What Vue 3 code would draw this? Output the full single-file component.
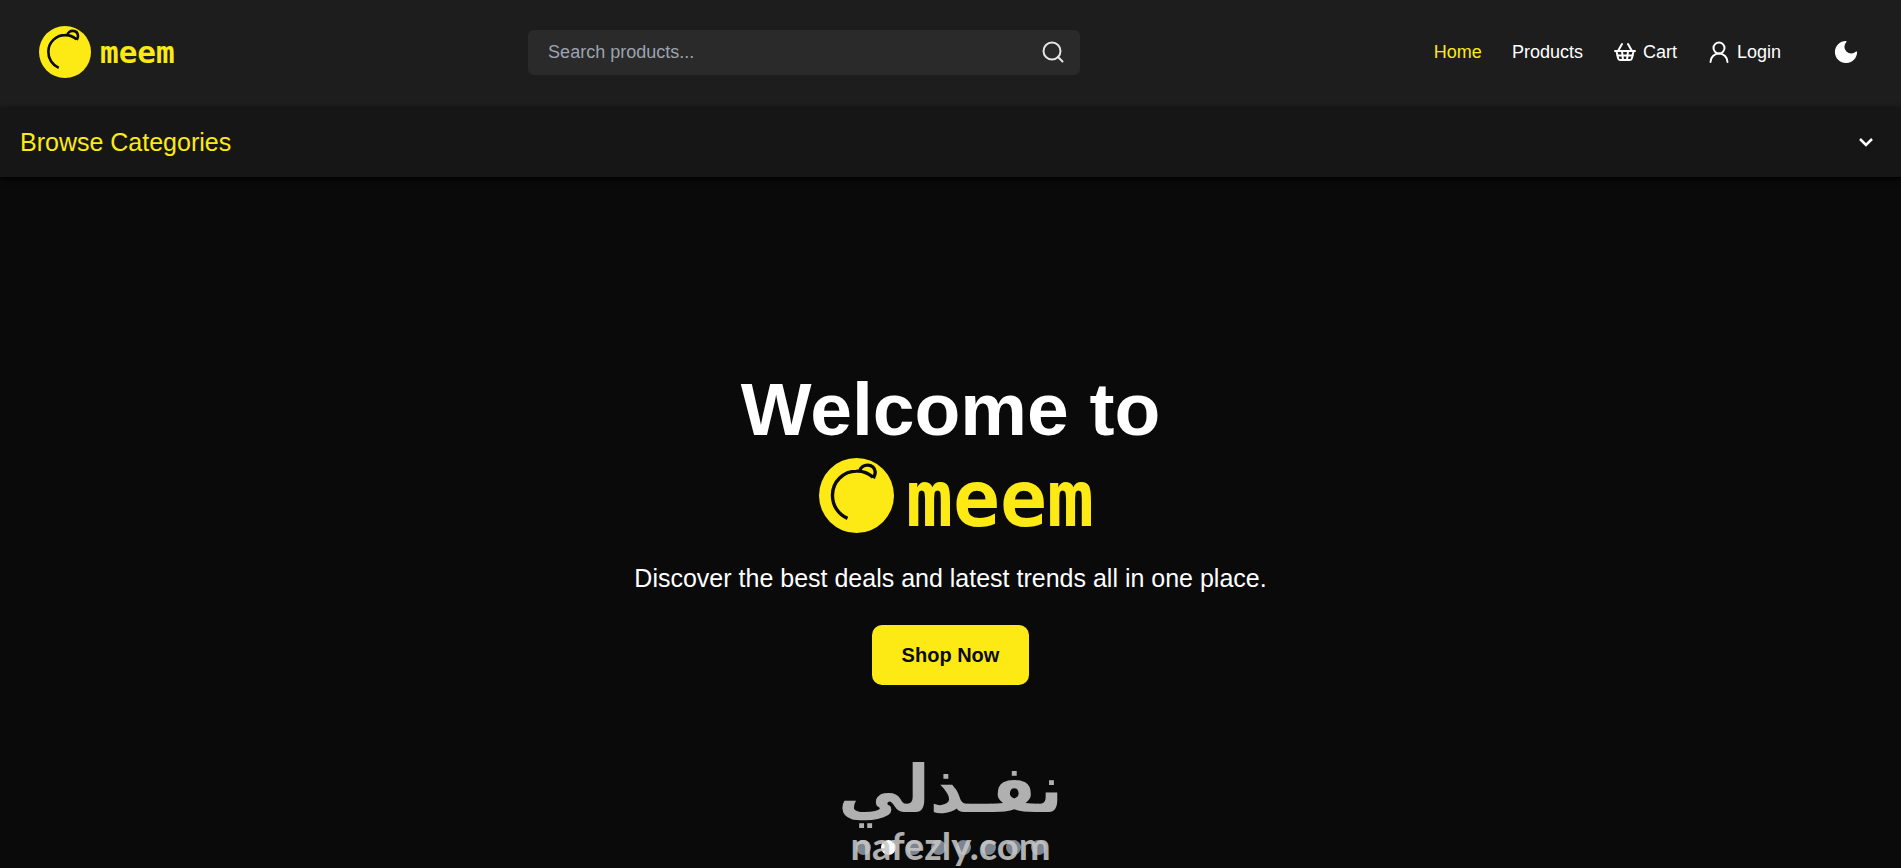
<script setup>
import { ref } from "vue";

const keyword = ref("");
const showCategories = ref(false);
const activeSlide = ref(1);
const slideCount = 8;

// 切换分类面板
function toggleCategories() {
  showCategories.value = !showCategories.value;
}

// 切换轮播
function goToSlide(index) {
  activeSlide.value = index;
}
</script>

<template>
  <div class="page">
    <header class="header">
      <a href="#" class="logo">
        <svg class="logo-icon" viewBox="0 0 100 100" aria-hidden="true">
          <circle cx="50" cy="50" r="50" fill="#fdea14" />
          <g fill="none" stroke="#0a0a0a" stroke-width="5">
            <path d="M38 80.5A33 33 0 0 1 18 49A32 32 0 0 1 50 17.5Q62 17 72 25.5" />
            <path d="M54.5 17.5C56 7 74 6 75 19Q75 22 72.5 27" />
          </g>
        </svg>
        <span class="logo-text">meem</span>
      </a>

      <form class="search" @submit.prevent>
        <input
          v-model="keyword"
          class="search-input"
          type="text"
          placeholder="Search products..."
          aria-label="Search products"
        />
        <button class="search-btn" type="submit" aria-label="Search">
          <svg class="icon" viewBox="0 0 24 24">
            <circle cx="11" cy="11" r="8.5" />
            <path d="m21.5 21.5-4.500-4.5" />
          </svg>
        </button>
      </form>

      <nav class="nav">
        <a href="#" class="nav-link active">Home</a>
        <a href="#" class="nav-link">Products</a>
        <a href="#" class="nav-link">
          <svg class="icon" viewBox="0 0 24 24">
            <path d="m15 11-1 9" />
            <path d="m19 11-4-7" />
            <path d="M2 11h20" />
            <path d="m3.5 11 1.6 7.4a2 2 0 0 0 2 1.6h9.800c.9 0 1.8-.7 2-1.6l1.7-7.4" />
            <path d="M4.5 15.5h15" />
            <path d="m5 11 4-7" />
            <path d="m9 11 1 9" />
          </svg>
          <span>Cart</span>
        </a>
        <a href="#" class="nav-link">
          <svg class="icon" viewBox="0 0 24 24">
            <circle cx="12" cy="8" r="5.5" />
            <path d="M20.5 22a8.500 8.500 0 0 0-17 0" />
          </svg>
          <span>Login</span>
        </a>
        <button class="theme-btn" type="button" aria-label="Toggle theme">
          <svg viewBox="0 0 24 24">
            <path
              d="M12 3a6 6 0 0 0 9 9 9 9 0 1 1-9-9Z"
              fill="#fff"
              stroke="#fff"
              stroke-linejoin="round"
            />
          </svg>
        </button>
      </nav>
    </header>

    <button
      class="categories"
      type="button"
      :aria-expanded="showCategories"
      @click="toggleCategories"
    >
      <span>Browse Categories</span>
      <svg class="icon chevron" viewBox="0 0 24 24">
        <path d="m6 9 6 6 6-6" />
      </svg>
    </button>

    <main class="hero">
      <h1 class="title">Welcome to</h1>
      <div class="hero-logo">
        <svg class="hero-logo-icon" viewBox="0 0 100 100" aria-hidden="true">
          <circle cx="50" cy="50" r="50" fill="#fdea14" />
          <g fill="none" stroke="#0a0a0a" stroke-width="4.5">
            <path d="M38 80.5A33 33 0 0 1 18 49A32 32 0 0 1 50 17.5Q62 17 72 25.5" />
            <path d="M54.5 17.5C56 7 74 6 75 19Q75 22 72.5 27" />
          </g>
        </svg>
        <span class="hero-logo-text">meem</span>
      </div>
      <p class="desc">
        Discover the best deals and latest trends all in one place.
      </p>
      <button class="shop-btn" type="button">Shop Now</button>

      <div class="dots">
        <button
          v-for="(n, index) in slideCount"
          :key="n"
          class="dot"
          :class="{ current: index === activeSlide }"
          type="button"
          :aria-label="`Slide ${n}`"
          @click="goToSlide(index)"
        ></button>
      </div>

      <div class="watermark">
        <span class="mark-ar" lang="ar" dir="rtl">نفـذلي</span>
        <span class="mark-en">nafezly.com</span>
      </div>
    </main>
  </div>
</template>

<style>
body {
  background: #0a0a0a;
}
</style>

<style scoped>
.page {
  display: flex;
  flex-direction: column;
  min-height: 100vh;
  font-family: "Liberation Sans", Arial, sans-serif;
  color: #fff;
}

.page * {
  box-sizing: border-box;
}

button {
  padding: 0;
  border: none;
  background: none;
  font-family: inherit;
  color: inherit;
  cursor: pointer;
}

.icon {
  width: 24px;
  height: 24px;
  fill: none;
  stroke: currentColor;
  stroke-width: 2;
  stroke-linecap: round;
  stroke-linejoin: round;
}

.header {
  display: flex;
  align-items: center;
  justify-content: space-between;
  padding: 26px 30px 29px;
  background: #1d1d1d;
}

.logo {
  display: flex;
  align-items: center;
  gap: 9px;
  padding-left: 9px;
  text-decoration: none;
}

.logo-icon {
  width: 52px;
  height: 52px;
}

.logo-text {
  font: bold 31px/40px "DejaVu Sans Mono", monospace;
  color: #fdea14;
}

.search {
  display: flex;
  align-items: center;
  width: 30%;
  height: 45px;
  border-radius: 6px;
  background: #2a2a2a;
}

.search-input {
  flex: 1;
  min-width: 0;
  height: 100%;
  padding: 0 20px;
  border: none;
  outline: none;
  background: transparent;
  font-family: inherit;
  font-size: 18px;
  color: #fff;
}

.search-input::placeholder {
  color: #9ca3af;
}

.search-btn {
  display: flex;
  padding: 0 15px;
  color: #e5e5e5;
}

.nav {
  display: flex;
  align-items: center;
  gap: 30px;
}

.nav-link {
  display: flex;
  align-items: center;
  gap: 6px;
  font-size: 18px;
  color: #fff;
  text-decoration: none;
}

.nav-link.active {
  color: #fdea14;
}

.theme-btn {
  display: flex;
  justify-content: center;
  width: 50px;
  margin-left: 10px;
}

.theme-btn svg {
  width: 28px;
  height: 28px;
}

.categories {
  display: flex;
  align-items: center;
  justify-content: space-between;
  height: 70px;
  padding: 0 20px;
  background: #161616;
  box-shadow: 0 2px 5px #000;
  font-size: 25px;
  color: #fdea14;
}

.chevron {
  margin-right: 3px;
  color: #fff;
  stroke-width: 2.5;
  stroke-linecap: butt;
  stroke-linejoin: miter;
}

.hero {
  position: relative;
  flex: 1;
  display: flex;
  flex-direction: column;
  align-items: center;
  justify-content: center;
  padding: 44px 20px 40px;
  text-align: center;
}

.title {
  margin: 0;
  font-size: 75px;
  line-height: 90px;
}

.hero-logo {
  display: flex;
  align-items: center;
  gap: 12px;
  padding-left: 12px;
}

.hero-logo-icon {
  width: 75px;
  height: 75px;
}

.hero-logo-text {
  padding-top: 8px;
  font: bold 78px/75px "DejaVu Sans Mono", monospace;
  color: #fdea14;
}

.desc {
  margin: 24px 0 30px;
  font-size: 25px;
  line-height: 34px;
}

.shop-btn {
  padding: 0 30px;
  border-radius: 10px;
  background: #fdea14;
  font-size: 20px;
  font-weight: bold;
  line-height: 60px;
  color: #0a0a0a;
}

/* 轮播指示点 */
.dots {
  position: absolute;
  bottom: 13px;
  left: 0;
  right: 0;
  display: flex;
  justify-content: center;
  gap: 10px;
}

.dot {
  width: 15px;
  height: 15px;
  border-radius: 50%;
  background: #7d8590;
}

.dot.current {
  background: #fff;
}

/* 水印 */
.watermark {
  position: absolute;
  bottom: 0;
  left: 0;
  right: 0;
  display: flex;
  flex-direction: column;
  align-items: center;
  color: #c8c8c8;
  font-weight: bold;
  opacity: 0.88;
  pointer-events: none;
}

.mark-ar {
  font-family: "DejaVu Sans", sans-serif;
  font-size: 66px;
  line-height: 66px;
}

.mark-en {
  font-family: Lato, sans-serif;
  font-size: 38px;
  line-height: 45px;
}
</style>
